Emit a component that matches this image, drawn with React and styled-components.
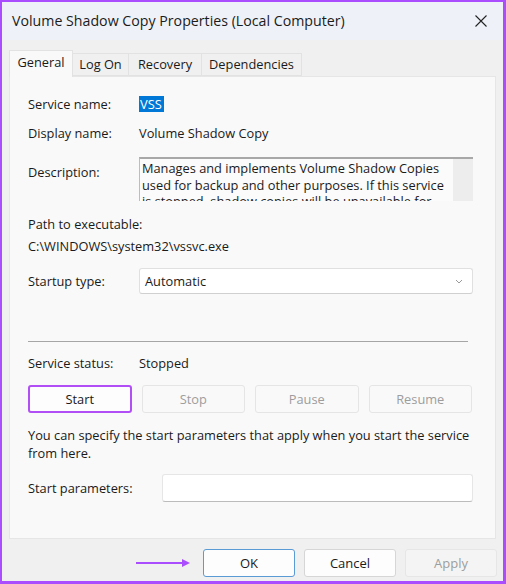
import React from "react";
import styled, { createGlobalStyle } from "styled-components";

const GlobalStyle = createGlobalStyle`
  html, body {
    margin: 0;
    padding: 0;
    background: #f0f0f0;
  }
  * {
    box-sizing: border-box;
  }
`;

const Window = styled.div`
  width: 506px;
  height: 584px;
  border: solid #a94dff;
  border-width: 2px 3px 3px 2px;
  background: #f0f0f0;
  display: flex;
  flex-direction: column;
  font-family: "Segoe UI", "Open Sans", sans-serif;
  font-size: 12.8px;
  color: #1a1a1a;
`;

const TitleBar = styled.div`
  height: 38px;
  background: #eef2f8;
  display: flex;
  align-items: center;
  justify-content: space-between;
  padding: 0 16px 0 10px;
  flex-shrink: 0;
`;

const Title = styled.div`
  font-size: 14.2px;
  color: #1b1b1b;
  padding-bottom: 2px;
`;

const Body = styled.div`
  flex: 1;
  display: flex;
  flex-direction: column;
  padding: 9px 7px 0 7px;
`;

const TabStrip = styled.div`
  display: flex;
  align-items: flex-end;
  height: 27px;
  position: relative;
  z-index: 1;
`;

const Tab = styled.div`
  width: ${({ $w }) => $w}px;
  height: ${({ $active }) => ($active ? "27px" : "23px")};
  padding-bottom: ${({ $active }) => ($active ? "5px" : "2px")};
  display: flex;
  align-items: center;
  justify-content: center;
  background: ${({ $active }) => ($active ? "#f9f9f9" : "#f0f0f0")};
  border: 1px solid #e2e2e2;
  border-bottom: ${({ $active }) => ($active ? "none" : "1px solid #e2e2e2")};
  margin-left: ${({ $active }) => ($active ? "0" : "-1px")};
  margin-bottom: ${({ $active }) => ($active ? "-1px" : "0")};
  color: #1a1a1a;
`;

const Panel = styled.div`
  height: 463px;
  background: #f9f9f9;
  border: 1px solid #e6e6e6;
  padding: 18px 22px 0 18px;
  display: flex;
  flex-direction: column;
`;

const Row = styled.div`
  display: flex;
  align-items: ${({ $top }) => ($top ? "flex-start" : "center")};
  margin-top: ${({ $mt }) => $mt || 0}px;
  min-height: 18px;
`;

const Label = styled.div`
  width: ${({ $w }) => $w || 111}px;
  flex-shrink: 0;
  line-height: 18px;
  margin-top: ${({ $mt }) => $mt || 0}px;
`;

const Value = styled.div`
  line-height: 18px;
`;

const Selected = styled.span`
  background: #0078d7;
  color: #fff;
  padding: 0 2px 0 1px;
  line-height: 16px;
  display: inline-block;
`;

const TextArea = styled.div`
  flex: 1;
  height: 44px;
  display: flex;
  border-top: 2px solid #a8a8a8;
  border-left: 1px solid #bdbdbd;
  background: #fbfbfb;
  overflow: hidden;
`;

const TextAreaText = styled.div`
  flex: 1;
  padding: 1px 0 0 2px;
  line-height: 16.5px;
`;

const ScrollTrack = styled.div`
  width: 20px;
  flex-shrink: 0;
  background: #ededed;
`;

const Line = styled.div`
  line-height: 18px;
  margin-top: ${({ $mt }) => $mt || 0}px;
  white-space: nowrap;
`;

const Combo = styled.div`
  flex: 1;
  height: 26px;
  background: #fff;
  border: 1px solid #e0e0e0;
  border-bottom-color: #d0d0d0;
  border-radius: 3px;
  display: flex;
  align-items: center;
  justify-content: space-between;
  padding: 0 9px 0 5px;
`;

const Separator = styled.div`
  height: 1px;
  background: #a6a6a6;
  margin: 47px 5px 0 0;
`;

const ButtonGrid = styled.div`
  display: grid;
  grid-template-columns: repeat(4, 1fr);
  column-gap: 10px;
  margin-top: 13px;
  margin-right: 1px;
`;

const Button = styled.div`
  height: 28px;
  display: flex;
  align-items: center;
  justify-content: center;
  background: ${({ $disabled }) => ($disabled ? "#f9f9f9" : "#fdfdfd")};
  border: ${({ $focus }) => ($focus ? "2px solid #b24ef6" : "1px solid #e5e5e5")};
  border-radius: 3px;
  color: ${({ $disabled }) => ($disabled ? "#9d9d9d" : "#1a1a1a")};
`;

const Input = styled.div`
  flex: 1;
  height: 28px;
  background: #fff;
  border: 1px solid #e6e6e6;
  border-bottom-color: #bcbcbc;
  border-radius: 3px;
`;

const Footer = styled.div`
  display: flex;
  justify-content: flex-end;
  align-items: center;
  gap: 9px;
  padding: 10px 0 0 0;
  margin-right: -1px;
`;

const FooterButton = styled.div`
  width: 92px;
  height: 28px;
  display: flex;
  align-items: center;
  justify-content: center;
  border-radius: 3px;
  background: ${({ $disabled }) => ($disabled ? "#f4f4f4" : "#fdfdfd")};
  border: 1px solid
    ${({ $primary, $disabled }) =>
      $primary ? "#5b9bd5" : $disabled ? "#e6e6e6" : "#d6d6d6"};
  color: ${({ $disabled }) => ($disabled ? "#9d9d9d" : "#1a1a1a")};
  font-size: 13px;
`;

const Arrow = styled.svg`
  margin-right: 2px;
`;

const CloseIcon = () => (
  <svg width="12" height="12" viewBox="0 0 12 12">
    <path d="M0.5 0.5 L11.5 11.5 M11.5 0.5 L0.5 11.5" stroke="#222" strokeWidth="1.1" />
  </svg>
);

const Chevron = () => (
  <svg width="8" height="5" viewBox="0 0 8 5">
    <path d="M1 1 L4 4 L7 1" stroke="#9a9a9a" strokeWidth="1" fill="none" />
  </svg>
);

const tabs = [
  { name: "General", w: 64, active: true },
  { name: "Log On", w: 57 },
  { name: "Recovery", w: 74 },
  { name: "Dependencies", w: 101 },
];

export default function App() {
  return (
    <>
      <GlobalStyle />
      <Window>
        <TitleBar>
          <Title>Volume Shadow Copy Properties (Local Computer)</Title>
          <CloseIcon />
        </TitleBar>
        <Body>
          <TabStrip>
            {tabs.map((t) => (
              <Tab key={t.name} $w={t.w} $active={t.active}>
                {t.name}
              </Tab>
            ))}
          </TabStrip>
          <Panel>
            <Row>
              <Label>Service name:</Label>
              <Selected>VSS</Selected>
            </Row>
            <Row $mt={11}>
              <Label>Display name:</Label>
              <Value>Volume Shadow Copy</Value>
            </Row>
            <Row $mt={15} $top>
              <Label $mt={6}>Description:</Label>
              <TextArea>
                <TextAreaText>
                  Manages and implements Volume Shadow Copies used for backup and other
                  purposes. If this service is stopped, shadow copies will be unavailable for
                  backup and the backup may fail.
                </TextAreaText>
                <ScrollTrack />
              </TextArea>
            </Row>
            <Line $mt={14}>Path to executable:</Line>
            <Line $mt={4}>C:\WINDOWS\system32\vssvc.exe</Line>
            <Row $mt={13}>
              <Label>Startup type:</Label>
              <Combo>
                <span>Automatic</span>
                <Chevron />
              </Combo>
            </Row>
            <Separator />
            <Row $mt={12}>
              <Label>Service status:</Label>
              <Value>Stopped</Value>
            </Row>
            <ButtonGrid>
              <Button $focus>Start</Button>
              <Button $disabled>Stop</Button>
              <Button $disabled>Pause</Button>
              <Button $disabled>Resume</Button>
            </ButtonGrid>
            <Line $mt={13}>
              You can specify the start parameters that apply when you start the service
              <br />
              from here.
            </Line>
            <Row $mt={12}>
              <Label $w={134}>Start parameters:</Label>
              <Input />
            </Row>
          </Panel>
          <Footer>
            <Arrow width="56" height="10" viewBox="0 0 56 10">
              <path d="M0 5 H50" stroke="#a94dff" strokeWidth="2" />
              <path d="M46 1 L54 5 L46 9 Z" fill="#a94dff" />
            </Arrow>
            <FooterButton $primary>OK</FooterButton>
            <FooterButton>Cancel</FooterButton>
            <FooterButton $disabled>Apply</FooterButton>
          </Footer>
        </Body>
      </Window>
    </>
  );
}
